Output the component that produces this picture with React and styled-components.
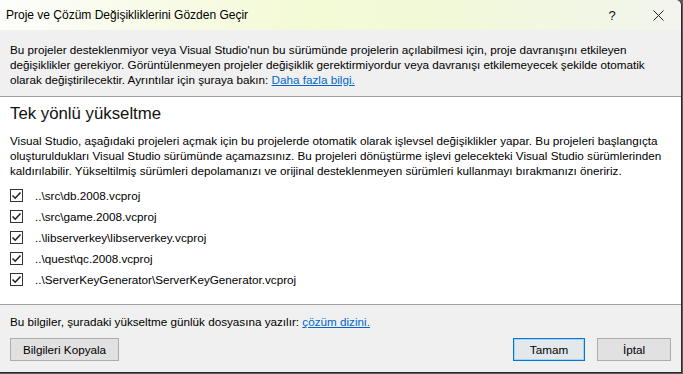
import React from "react";
import styled, { createGlobalStyle } from "styled-components";

const Global = createGlobalStyle`
  html, body { margin: 0; padding: 0; background: #5a5a5a; }
  body { width: 683px; height: 374px; overflow: hidden; }
  * { box-sizing: border-box; }
`;

const Window = styled.div`
  width: 682px;
  height: 373px;
  background: #f0f0f0;
  border-right: 1px solid #2b2b2b;
  border-bottom: 1px solid #2b2b2b;
  border-top-right-radius: 6px;
  display: flex;
  flex-direction: column;
  font-family: "Liberation Sans", Arial, sans-serif;
  font-size: 11.7px;
  color: #000;
  overflow: hidden;
`;

const TitleBar = styled.div`
  height: 30px;
  flex: 0 0 30px;
  display: flex;
  align-items: center;
  padding-left: 6px;
  background: linear-gradient(90deg, #fdfdfb 0%, #f7fbe6 25%, #f3fad6 45%, #f2f9d8 65%, #f2f7e4 85%, #f2f4ee 100%);
  font-size: 12px;
`;

const TitleText = styled.div`
  flex: 1;
`;

const TitleButton = styled.div`
  width: 46px;
  height: 30px;
  display: flex;
  align-items: center;
  justify-content: center;
  font-size: 13px;
  color: #111;
`;

const Header = styled.div`
  padding: 12px 10px 0 10px;
  height: 67px;
  flex: 0 0 67px;
  line-height: 15px;
  white-space: nowrap;
  border-bottom: 1px solid #a0a0a0;
`;

const Link = styled.a`
  color: #0066cc;
  text-decoration: underline;
  cursor: pointer;
`;

const Body = styled.div`
  flex: 1;
  background: #fff;
  padding: 6px 10px 0 10px;
  border-bottom: 1px solid #a0a0a0;
`;

const Heading = styled.div`
  font-size: 16.8px;
  line-height: 22px;
  font-weight: 400;
  color: #111;
  margin-bottom: 8px;
`;

const Para = styled.div`
  line-height: 15px;
  white-space: nowrap;
  margin-bottom: 11px;
`;

const List = styled.div`
  display: flex;
  flex-direction: column;
  gap: 8px;
`;

const Row = styled.label`
  display: flex;
  align-items: center;
  gap: 12px;
  height: 13px;
`;

const Box = styled.span`
  width: 13px;
  height: 13px;
  border: 1px solid #333;
  background: #fff;
  display: flex;
  align-items: center;
  justify-content: center;
`;

const Footer = styled.div`
  height: 67px;
  flex: 0 0 67px;
  padding: 10px 10px 0 10px;
  display: flex;
  flex-direction: column;
  gap: 10px;
`;

const ButtonRow = styled.div`
  display: flex;
  align-items: center;
`;

const Spacer = styled.div`
  flex: 1;
`;

const Button = styled.button`
  height: 23px;
  width: ${(p) => p.$w}px;
  margin-left: ${(p) => p.$ml || 0}px;
  background: ${(p) => (p.$primary ? "#e3e8ec" : "#e1e1e1")};
  border: 1px solid ${(p) => (p.$primary ? "#0078d7" : "#adadad")};
  box-shadow: ${(p) => (p.$primary ? "inset 0 0 0 1px #a9d2f2" : "none")};
  font-family: "Liberation Sans", Arial, sans-serif;
  font-size: 11.7px;
  color: #000;
  padding: 0;
`;

const Check = () => (
  <svg width="11" height="11" viewBox="0 0 11 11">
    <path d="M1.5 5.5 L4.2 8.2 L9.5 2.5" fill="none" stroke="#222" strokeWidth="1.6" />
  </svg>
);

const files = [
  "..\\src\\db.2008.vcproj",
  "..\\src\\game.2008.vcproj",
  "..\\libserverkey\\libserverkey.vcproj",
  "..\\quest\\qc.2008.vcproj",
  "..\\ServerKeyGenerator\\ServerKeyGenerator.vcproj",
];

export default function App() {
  return (
    <>
      <Global />
      <Window>
        <TitleBar>
          <TitleText>Proje ve Çözüm Değişikliklerini Gözden Geçir</TitleText>
          <TitleButton>?</TitleButton>
          <TitleButton>
            <svg width="11" height="11" viewBox="0 0 11 11">
              <path d="M0.5 0.5 L10.5 10.5 M10.5 0.5 L0.5 10.5" stroke="#222" strokeWidth="1" />
            </svg>
          </TitleButton>
        </TitleBar>
        <Header>
          Bu projeler desteklenmiyor veya Visual Studio'nun bu sürümünde projelerin açılabilmesi için, proje davranışını etkileyen
          <br />
          değişiklikler gerekiyor. Görüntülenmeyen projeler değişiklik gerektirmiyordur veya davranışı etkilemeyecek şekilde otomatik
          <br />
          olarak değiştirilecektir. Ayrıntılar için şuraya bakın: <Link>Daha fazla bilgi.</Link>
        </Header>
        <Body>
          <Heading>Tek yönlü yükseltme</Heading>
          <Para>
            Visual Studio, aşağıdaki projeleri açmak için bu projelerde otomatik olarak işlevsel değişiklikler yapar. Bu projeleri başlangıçta
            <br />
            oluşturuldukları Visual Studio sürümünde açamazsınız. Bu projeleri dönüştürme işlevi gelecekteki Visual Studio sürümlerinden
            <br />
            kaldırılabilir. Yükseltilmiş sürümleri depolamanızı ve orijinal desteklenmeyen sürümleri kullanmayı bırakmanızı öneririz.
          </Para>
          <List>
            {files.map((f) => (
              <Row key={f}>
                <Box>
                  <Check />
                </Box>
                {f}
              </Row>
            ))}
          </List>
        </Body>
        <Footer>
          <div>
            Bu bilgiler, şuradaki yükseltme günlük dosyasına yazılır: <Link>çözüm dizini.</Link>
          </div>
          <ButtonRow>
            <Button $w={109}>Bilgileri Kopyala</Button>
            <Spacer />
            <Button $w={72} $primary>Tamam</Button>
            <Button $w={74} $ml={12}>İptal</Button>
          </ButtonRow>
        </Footer>
      </Window>
    </>
  );
}
